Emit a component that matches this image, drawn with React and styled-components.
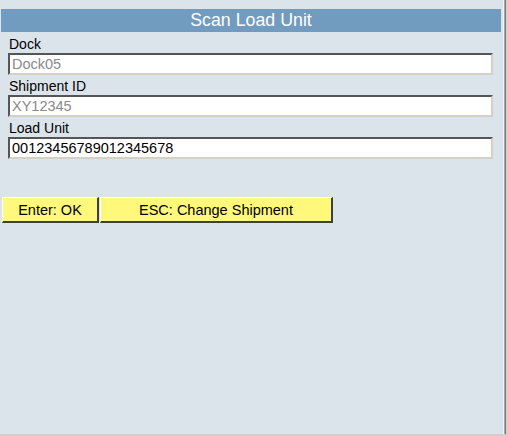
import React from "react";
import styled, { createGlobalStyle } from "styled-components";

const Global = createGlobalStyle`
  html, body { margin: 0; padding: 0; background: #d4d0c8; }
  body { font-family: "Liberation Sans", Arial, sans-serif; }
`;

const Page = styled.div`
  width: 503px;
  height: 434px;
  box-sizing: border-box;
  background: #dce4eb;
  padding: 9px 2px 0 1px;
  box-shadow: 1px 0 0 #f4f4f4, 2px 0 0 #a8a8a8, 3px 0 0 #7c7c7c, 5px 0 0 #d4d0c8, 0 2px 0 #d4d0c8;
  display: flex;
  flex-direction: column;
`;

const Header = styled.div`
  height: 23px;
  background: #729bc0;
  color: #ffffff;
  font-size: 17.8px;
  line-height: 23px;
  text-align: center;
`;

const Form = styled.div`
  display: flex;
  flex-direction: column;
  padding: 4px 0 0 7px;
`;

const Field = styled.div`
  display: flex;
  flex-direction: column;
  margin-bottom: 3px;
`;

const Label = styled.div`
  font-size: 14px;
  line-height: 17px;
  height: 17px;
  color: #000;
  padding-left: 1px;
`;

const Input = styled.input`
  box-sizing: border-box;
  width: 485px;
  height: 22px;
  margin: 0;
  padding: 0 2px;
  border: 2px solid;
  border-color: #555555 #d4d0c8 #d4d0c8 #555555;
  background: #ffffff;
  font-family: "Liberation Sans", Arial, sans-serif;
  font-size: 14.5px;
  color: ${(p) => (p.$muted ? "#8a8a8a" : "#000000")};
  outline: none;
`;

const ButtonBar = styled.div`
  display: flex;
  gap: 1px;
  margin-top: 35px;
  padding-left: 1px;
`;

const KeyButton = styled.button`
  box-sizing: border-box;
  width: ${(p) => p.$w}px;
  height: 26px;
  margin: 0;
  padding: 0;
  background: #fff87a;
  border-style: solid;
  border-width: 1px 2px 2px 1px;
  border-color: #ffffff #404040 #404040 #ffffff;
  font-family: "Liberation Sans", Arial, sans-serif;
  font-size: 14.5px;
  color: #000;
  text-align: center;
  cursor: pointer;
`;

export default function App() {
  return (
    <>
      <Global />
      <Page>
        <Header>Scan Load Unit</Header>
        <Form>
          <Field>
            <Label>Dock</Label>
            <Input $muted readOnly defaultValue="Dock05" />
          </Field>
          <Field>
            <Label>Shipment ID</Label>
            <Input $muted readOnly defaultValue="XY12345" />
          </Field>
          <Field>
            <Label>Load Unit</Label>
            <Input defaultValue="00123456789012345678" />
          </Field>
        </Form>
        <ButtonBar>
          <KeyButton $w={97}>Enter: OK</KeyButton>
          <KeyButton $w={233}>ESC: Change Shipment</KeyButton>
        </ButtonBar>
      </Page>
    </>
  );
}
